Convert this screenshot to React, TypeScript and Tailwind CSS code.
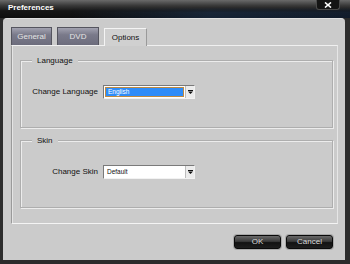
import React from "react";

const font = { fontFamily: '"Liberation Sans", Arial, sans-serif' };

function Tab({ label, active }: { label: string; active?: boolean }) {
  if (active) {
    return (
      <div className="h-[18px] w-[43px] mt-0 flex items-center justify-center text-[8px] text-[#111] bg-[#d0d0d0] border border-b-0 border-t-[#f4f4f4] border-l-[#f4f4f4] border-r-[#9a9a9a] relative z-10 -mb-px">
        {label}
      </div>
    );
  }
  return (
    <div className="h-[18px] flex items-center justify-center text-[8px] text-[#e4e4e4] bg-[linear-gradient(to_bottom,#a2a2b0,#7a7a8a_40%,#6c6c7c)] border border-[#55555f] border-b-0">
      {label}
    </div>
  );
}

function Select({ value, highlighted }: { value: string; highlighted?: boolean }) {
  return (
    <div className="w-[92px] h-[14px] flex border border-t-[#7a7a7a] border-l-[#7a7a7a] border-r-[#f2f2f2] border-b-[#f2f2f2] bg-white">
      <div className="flex-1 p-[1px] flex">
        <div
          className={
            "flex-1 flex items-center pl-[2px] text-[6.5px] " +
            (highlighted ? "bg-[#2f8cf8] text-white border border-[#c08a40]" : "text-[#111]")
          }
        >
          {value}
        </div>
      </div>
      <div className="w-[9px] flex items-center justify-center bg-[#ececec] border-l border-[#bdbdbd]">
        <svg width="5" height="4" viewBox="0 0 5 4">
          <rect x="0" y="0" width="5" height="1" fill="#111" />
          <polygon points="0,1.5 5,1.5 2.5,4" fill="#111" />
        </svg>
      </div>
    </div>
  );
}

function Group({ title, children }: { title: string; children: React.ReactNode }) {
  return (
    <div className="relative h-[68px] border border-[#aeaeae] shadow-[inset_1px_1px_0_#ececec,1px_1px_0_#ececec]">
      <div className="absolute left-[11px] -top-[6px] px-[5px] bg-[#cbcbcb] text-[8px] text-[#111] leading-[11px]">
        {title}
      </div>
      {children}
    </div>
  );
}

function Row({ label, value, highlighted, top }: { label: string; value: string; highlighted?: boolean; top: number }) {
  return (
    <div className="flex items-center" style={{ marginTop: top }}>
      <div className="w-[82px] text-right text-[8px] text-[#111] pr-[5px]">{label}</div>
      <Select value={value} highlighted={highlighted} />
    </div>
  );
}

function Btn({ label }: { label: string }) {
  return (
    <div className="w-[47px] h-[14px] rounded-[3px] border border-[#0a0a0a] bg-[linear-gradient(to_bottom,#6a6a6a,#3a3a3a_45%,#121212_55%,#1e1e1e)] flex items-center justify-center text-[8px] text-[#d8d8d8] shadow-[0_0_0_1px_#a8a8a8]">
      {label}
    </div>
  );
}

export default function App() {
  return (
    <div className="w-[350px] h-[264px] bg-[#2c2c2c] flex flex-col overflow-hidden" style={font}>
      <div className="relative h-[18px] shrink-0 bg-[linear-gradient(to_bottom,#6a6a6a,#3a3a3a_30%,#161616_60%,#0e0e0e)]">
        <div className="absolute inset-0 bg-[linear-gradient(to_right,rgba(0,0,0,0)_20%,rgba(30,60,100,0.45)_60%,rgba(20,40,70,0.5))] [mask-image:linear-gradient(to_bottom,transparent_40%,black_70%)]" />
        <div className="relative pl-[8px] pt-[2px] text-[8px] font-bold text-white">Preferences</div>
        <div className="absolute right-[10px] top-0 w-[24px] h-[10px] rounded-b-[3px] bg-[#141414] border border-t-0 border-[#4a4a4a] flex items-center justify-center">
          <svg width="8" height="6" viewBox="0 0 8 6">
            <path d="M1 0.5 L7 5.5 M7 0.5 L1 5.5" stroke="#fff" strokeWidth="1.6" />
          </svg>
        </div>
      </div>
      <div className="flex-1 ml-[3px] mr-[5px] mb-[4px] bg-[#cbcbcb] rounded-t-[4px] border-t border-[#e0e0e0] flex flex-col pl-[8px] pr-[7px] pt-[8px]">
        <div className="flex gap-[5px] items-end">
          <div className="w-[41px]"><Tab label="General" /></div>
          <div className="w-[42px]"><Tab label="DVD" /></div>
          <Tab label="Options" active />
        </div>
        <div className="h-[179px] border border-t-[#f0f0f0] border-l-[#9a9a9a] border-r-[#e6e6e6] border-b-[#f4f4f4] shadow-[inset_1px_0_0_#e4e4e4] pl-[8px] pr-[4px] pt-[14px] flex flex-col">
          <Group title="Language">
            <Row label="Change Language" value="English" highlighted top={24} />
          </Group>
          <div className="h-[12px]" />
          <Group title="Skin">
            <Row label="Change Skin" value="Default" top={24} />
          </Group>
        </div>
        <div className="flex justify-end gap-[5px] mt-[11px] pr-[5px]">
          <Btn label="OK" />
          <Btn label="Cancel" />
        </div>
      </div>
    </div>
  );
}
